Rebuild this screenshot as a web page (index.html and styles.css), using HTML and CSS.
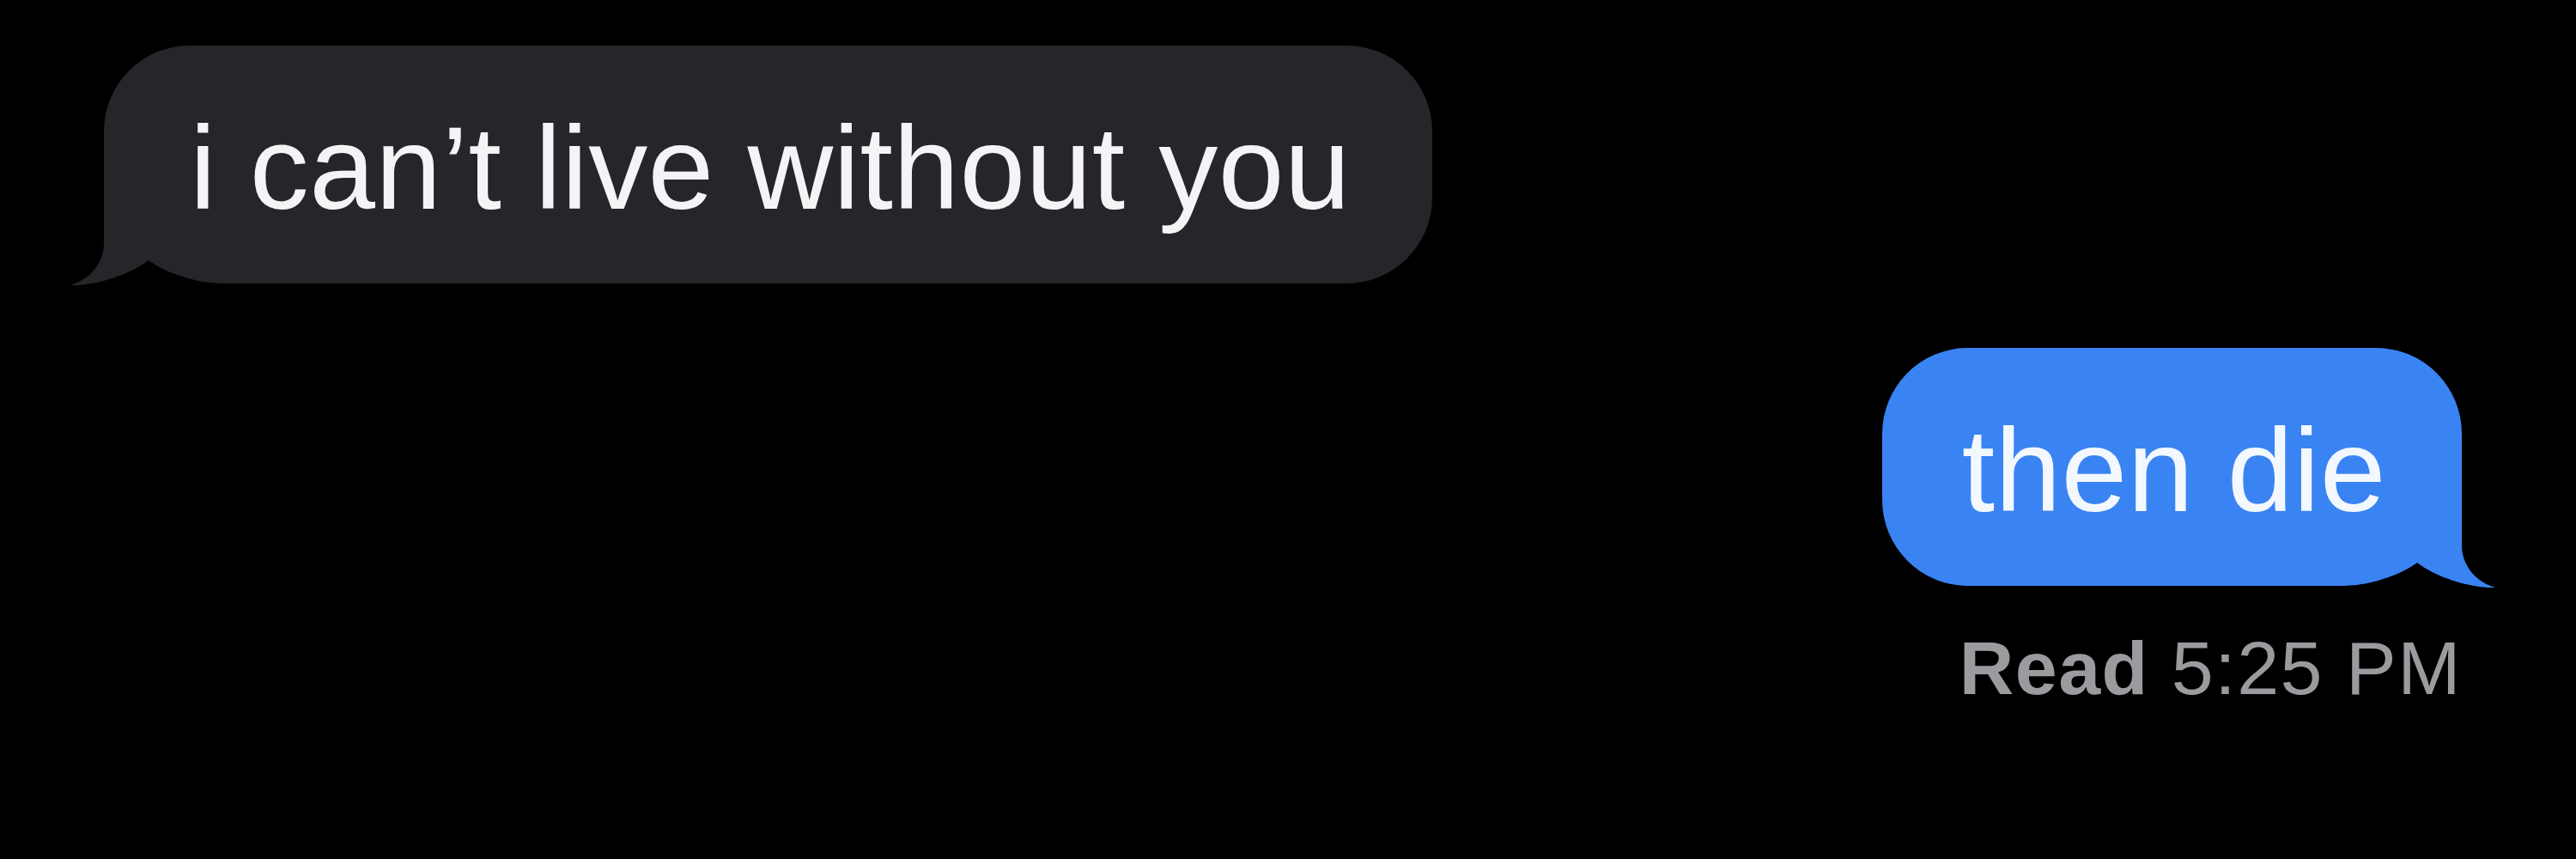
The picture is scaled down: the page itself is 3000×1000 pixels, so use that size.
FILE: index.html
```html
<!DOCTYPE html>
<html>
<head>
	<meta charset="utf-8">
	<link rel="stylesheet" href="styles.css">
</head>
<body>

	<div class="thread">
		<div class="bubble in">
			<svg class="tail" viewBox="-50 -140 200 145"><path d="M0 -140 L0 -47 C0 -25 -15 -5 -39 2 C-10 3 30 -10 52 -27 C72 -12 105 -1 150 0 L150 -140 Z"/></svg>
			<span class="text">i can’t live without you</span>
		</div>

		<div class="bubble out">
			<svg class="tail" viewBox="-50 -140 200 145"><path d="M0 -140 L0 -47 C0 -25 -15 -5 -39 2 C-10 3 30 -10 52 -27 C72 -12 105 -1 150 0 L150 -140 Z"/></svg>
			<span class="text">then die</span>
		</div>

		<div class="receipt"><b>Read</b> 5:25 PM</div>
	</div>

</body>
</html>
```

FILE: styles.css
```css
html, body {
	margin: 0px;
	background: black;
	font-family: "Liberation Sans", Arial, sans-serif;
}

.thread {
	display: flex;
	flex-direction: column;
	align-items: flex-start;
	padding: 53px 133px 0px 121px;
}

.bubble {
	position: relative;
	box-sizing: border-box;
	height: 277px;
	padding-top: 8px;
	line-height: 269px;
	font-size: 138px;
	letter-spacing: 0.4px;
	white-space: nowrap;
	border-radius: 100px;
}

.bubble .text {
	position: relative;
}

/* tail sits over the bottom corner of the bubble */
.bubble .tail {
	position: absolute;
	bottom: -5px;
	width: 200px;
	height: 145px;
}

.in {
	background: #262529;
	color: #f4f4f6;
	padding-left: 100px;
	padding-right: 95px;
	border-bottom-left-radius: 138px;
}

.in .tail { left: -50px; }
.in .tail path { fill: #262529; }

.out {
	align-self: flex-end;
	margin-top: 75px;
	background: #3a83f3;
	color: #f3f8ff;
	padding-left: 93px;
	padding-right: 88px;
	border-bottom-right-radius: 138px;
}

.out .tail {
	right: -50px;
	transform: scaleX(-1);
}
.out .tail path { fill: #3a83f3; }

.receipt {
	align-self: flex-end;
	margin-top: 52px;
	font-size: 88px;
	line-height: 88px;
	letter-spacing: 1.5px;
	color: #9b9b9f;
}

.receipt b { font-weight: bold; }
```
